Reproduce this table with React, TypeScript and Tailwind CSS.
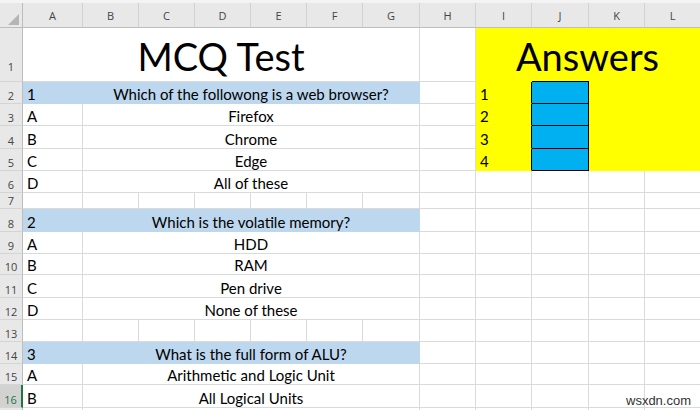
import React from "react";

const LETTERS = ["A", "B", "C", "D", "E", "F", "G", "H", "I", "J", "K", "L"];

const CELL_FONT = "font-['Lato','Liberation_Sans',sans-serif]";
const HEAD_FONT = "font-['Open_Sans','Noto_Sans',sans-serif]";

const base =
  "flex items-end overflow-hidden whitespace-nowrap border-r border-b text-[15px] leading-[18px] text-black " +
  CELL_FONT;
const grid = "border-[#dadada]";

function RowHead({ n, active, big }: { n?: number; active?: boolean; big?: boolean }) {
  return (
    <div
      className={
        HEAD_FONT +
        " flex items-end justify-center border-b border-[#d4d4d4] text-[11px] leading-[13px] " +
        (big ? "pb-[8px] " : "pb-[1px] ") +
        (active
          ? "bg-[#d2d2d2] text-[#217346] border-r-2 border-r-[#217346]"
          : "bg-[#e8e8e8] text-[#444] border-r border-r-[#bdbdbd]")
      }
    >
      {n}
    </div>
  );
}

function Empty({ span }: { span?: string }) {
  return <div className={base + " " + grid + " " + (span ?? "")} />;
}

function Blue({ text, span, center }: { text: string; span?: string; center?: boolean }) {
  return (
    <div
      className={
        base +
        " bg-[#bdd7ee] border-[#bdd7ee] " +
        (span ?? "") +
        (center ? " justify-center" : " pl-[4px]")
      }
    >
      {text}
    </div>
  );
}

function TextCell({ text, span, center }: { text: string; span?: string; center?: boolean }) {
  return (
    <div className={base + " " + grid + " " + (span ?? "") + (center ? " justify-center" : " pl-[4px]")}>
      {text}
    </div>
  );
}

function Yellow({ text, blackRight }: { text?: string; blackRight?: boolean }) {
  return (
    <div
      className={
        base +
        " bg-[#ffff00] border-b-[#ffff00] pl-[4px] " +
        (blackRight ? "border-r-black" : "border-r-[#ffff00]")
      }
    >
      {text}
    </div>
  );
}

function Cyan({ first }: { first?: boolean }) {
  return (
    <div className={base + " bg-[#00b0f0] border-black " + (first ? "shadow-[0_-1px_0_#000]" : "")} />
  );
}

function RightEmpty() {
  return (
    <>
      <Empty />
      <Empty />
      <Empty />
      <Empty />
      <Empty />
    </>
  );
}

function Question({
  n,
  question,
  options,
}: {
  n: number;
  question: string;
  options: [number, string, string][];
}) {
  return (
    <>
      <RowHead n={n} />
      <Blue text={String(Math.ceil(n / 6))} />
      <Blue text={question} span="col-span-6" center />
      <RightEmpty />
      {options.map(([row, letter, text]) => (
        <React.Fragment key={row}>
          <RowHead n={row} active={row === 16} />
          <TextCell text={letter} />
          <TextCell text={text} span="col-span-6" center />
          <RightEmpty />
        </React.Fragment>
      ))}
    </>
  );
}

export default function App() {
  return (
    <div className="relative w-[700px] h-[410px] overflow-hidden bg-white">
      <div className="h-[3px] bg-[#f4f4f4]" />
      <div className="grid grid-cols-[23px_60px_56px_56px_56px_56px_56px_57px_56px_56px_57px_56px_56px] grid-rows-[25px_54px_22px_22px_23px_22px_22px_16px_23px_22px_21px_23px_22px_22px_22px_21px_23px_22px] w-[720px]">
        {/* Column header row */}
        <div className="relative bg-[#e8e8e8] border-r border-b border-[#bdbdbd]">
          <svg className="absolute left-0 top-0" width="23" height="25" viewBox="0 0 23 25">
            <polygon points="19,11 19,22 8,22" fill="#b5b5b5" />
          </svg>
        </div>
        {LETTERS.map((l) => (
          <div
            key={l}
            className={
              HEAD_FONT +
              " flex items-center justify-center bg-[#e8e8e8] border-r border-r-[#d2d2d2] border-b border-b-[#bdbdbd] text-[11px] text-[#444] pt-[2px]"
            }
          >
            {l}
          </div>
        ))}

        {/* Row 1 */}
        <RowHead n={1} big />
        <div className={base + " " + grid + " col-span-7 justify-center text-[38px] leading-[46px] pb-[2px]"}>
          MCQ Test
        </div>
        <Empty />
        <div
          className={
            base +
            " col-span-4 bg-[#ffff00] border-[#ffff00] justify-center text-[38px] leading-[46px] pb-[2px] pr-[1px]"
          }
        >
          Answers
        </div>

        {/* Rows 2-5 with answer grid */}
        <RowHead n={2} />
        <Blue text="1" />
        <Blue text="Which of the followong is a web browser?" span="col-span-6" center />
        <Empty />
        <Yellow text="1" blackRight />
        <Cyan first />
        <Yellow />
        <Yellow />

        <RowHead n={3} />
        <TextCell text="A" />
        <TextCell text="Firefox" span="col-span-6" center />
        <Empty />
        <Yellow text="2" blackRight />
        <Cyan />
        <Yellow />
        <Yellow />

        <RowHead n={4} />
        <TextCell text="B" />
        <TextCell text="Chrome" span="col-span-6" center />
        <Empty />
        <Yellow text="3" blackRight />
        <Cyan />
        <Yellow />
        <Yellow />

        <RowHead n={5} />
        <TextCell text="C" />
        <TextCell text="Edge" span="col-span-6" center />
        <Empty />
        <Yellow text="4" blackRight />
        <Cyan />
        <Yellow />
        <Yellow />

        <RowHead n={6} />
        <TextCell text="D" />
        <TextCell text="All of these" span="col-span-6" center />
        <RightEmpty />

        {/* Row 7 */}
        <RowHead n={7} />
        {LETTERS.map((l) => (
          <Empty key={"r7" + l} />
        ))}

        <Question
          n={8}
          question="Which is the volatile memory?"
          options={[
            [9, "A", "HDD"],
            [10, "B", "RAM"],
            [11, "C", "Pen drive"],
            [12, "D", "None of these"],
          ]}
        />

        {/* Row 13 */}
        <RowHead n={13} />
        {LETTERS.map((l) => (
          <Empty key={"r13" + l} />
        ))}

        <Question
          n={14}
          question="What is the full form of ALU?"
          options={[
            [15, "A", "Arithmetic and Logic Unit"],
            [16, "B", "All Logical Units"],
          ]}
        />

        {/* Row 17 (barely visible) */}
        <RowHead />
        <Empty />
        <Empty span="col-span-6" />
        <RightEmpty />
      </div>

      <div className="absolute left-[626px] top-[393px] text-[13px] leading-[15px] text-[#333] font-['Liberation_Sans',Arial,sans-serif]">
        wsxdn.com
      </div>
    </div>
  );
}
